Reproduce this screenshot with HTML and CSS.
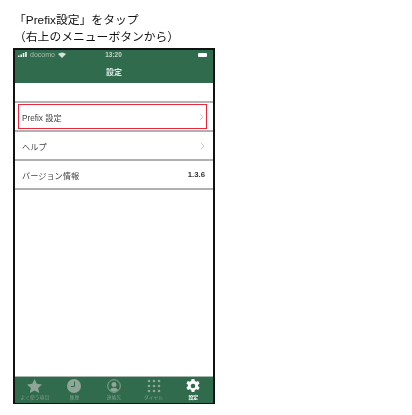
FILE: index.html
```html
<!DOCTYPE html>
<html lang="ja">
<head>
<meta charset="utf-8">
<title>Prefix設定</title>
<link rel="stylesheet" href="styles.css">
</head>
<body>
<div class="caption">
  <p>「Prefix設定」をタップ</p>
  <p>（右上のメニューボタンから）</p>
</div>
<div class="phone">
  <header class="head">
    <div class="status">
      <div class="status-left">
        <svg class="signal" width="9" height="5" viewBox="0 0 9 5"><path d="M0 3.5h1.5V5H0zM2.4 2.5h1.5V5H2.4zM4.8 1h1.5v4H4.8zM7.2 0h1.5v5H7.2z" fill="#fff"/></svg>
        <span>docomo</span>
        <svg width="8" height="6" viewBox="0 0 8 6"><path d="M0 2a6 6 0 0 1 8 0L4 6z" fill="#d5e2da"/></svg>
      </div>
      <span class="time">13:20</span>
      <div class="status-right"><span class="battery"></span></div>
    </div>
    <div class="title">設定</div>
  </header>
  <main class="content">
    <div class="spacer"></div>
    <ul class="list">
      <li class="row selected"><span>Prefix 設定</span><svg class="chev" width="5" height="8" viewBox="0 0 5 8"><path d="M1 1l3 3-3 3" fill="none" stroke="#cccccc" stroke-width="1"/></svg></li>
      <li class="row"><span>ヘルプ</span><svg class="chev" width="5" height="8" viewBox="0 0 5 8"><path d="M1 1l3 3-3 3" fill="none" stroke="#cccccc" stroke-width="1"/></svg></li>
      <li class="row"><span>バージョン情報</span><span class="version">1.3.6</span></li>
    </ul>
  </main>
  <nav class="tabs">
    <div class="tab">
      <svg width="15" height="14" viewBox="0 0 16 15"><path d="M8 0l2.4 5.1 5.6.7-4.1 3.8 1.1 5.4L8 12.300l-5 2.700 1.100-5.400L0 5.800l5.600-.7z" fill="#8fa597"/></svg>
      <span>よく使う項目</span>
    </div>
    <div class="tab">
      <svg width="14" height="14" viewBox="0 0 14 14"><circle cx="7" cy="7" r="7" fill="#8fa597"/><path d="M7.500 2.500V7.500H4" fill="none" stroke="#2f6b4c" stroke-width="1"/></svg>
      <span>履歴</span>
    </div>
    <div class="tab">
      <svg width="14" height="14" viewBox="0 0 14 14"><circle cx="7" cy="7" r="6.300" fill="none" stroke="#8fa597" stroke-width="1"/><circle cx="7" cy="5.500" r="2.500" fill="#8fa597"/><path d="M2.800 11a4.500 3.500 0 0 1 8.400 0A6 6 0 0 1 2.800 11z" fill="#8fa597"/></svg>
      <span>連絡先</span>
    </div>
    <div class="tab">
      <svg width="14" height="14" viewBox="0 0 14 14" fill="#8fa597"><circle cx="2" cy="2" r="1.300"/><circle cx="7" cy="2" r="1.300"/><circle cx="12" cy="2" r="1.300"/><circle cx="2" cy="7" r="1.300"/><circle cx="7" cy="7" r="1.300"/><circle cx="12" cy="7" r="1.300"/><circle cx="2" cy="12" r="1.300"/><circle cx="7" cy="12" r="1.300"/><circle cx="12" cy="12" r="1.300"/></svg>
      <span>ダイヤル</span>
    </div>
    <div class="tab active">
      <svg width="14" height="14" viewBox="0 0 14 14"><path fill-rule="evenodd" fill="#fff" d="M5.600 0h2.800l.4 2 1.500.8 1.900-.8 1.400 2.400-1.500 1.300v1.600L13.600 8.600l-1.400 2.400-1.900-.8-1.500.8-.4 2H5.600l-.4-2-1.500-.8-1.900.8L.4 8.600l1.500-1.300V5.700L.4 4.400 1.800 2l1.900.8 1.500-.8zM7 4.700a2.300 2.300 0 1 0 0 4.600 2.300 2.300 0 0 0 0-4.600z"/></svg>
      <span>設定</span>
    </div>
  </nav>
</div>
</body>
</html>
```

FILE: styles.css
```css
* { box-sizing: border-box; }
html, body { margin: 0; padding: 0; background: #fff; }
body {
  width: 412px;
  height: 415px;
  overflow: hidden;
  font-family: "Liberation Sans", "Noto Sans CJK JP", sans-serif;
}
.caption {
  height: 48px;
  padding: 12px 0 0 14px;
  font-size: 11.8px;
  line-height: 17px;
  color: #111;
  filter: blur(0.4px);
}
.caption p { margin: 0; }
.phone {
  width: 202px;
  height: 356px;
  margin-left: 13px;
  border: 2px solid #111;
  border-bottom-width: 1px;
  display: flex;
  flex-direction: column;
  background: #fff;
  filter: blur(0.45px);
}
.head {
  height: 33px;
  flex: none;
  background: #2f6b4c;
  color: #fff;
  display: flex;
  flex-direction: column;
}
.status {
  height: 10px;
  padding: 0 6px 0 3px;
  display: grid;
  grid-template-columns: 1fr auto 1fr;
  align-items: center;
  font-size: 7px;
  color: #a9c0b2;
}
.status-left { display: flex; align-items: center; gap: 3px; }
.status-right { display: flex; justify-content: flex-end; }
.time { font-size: 6.5px; font-weight: 700; color: #c5d6cb; margin-left: 2px; }
.battery {
  display: block;
  width: 9px;
  height: 4px;
  border-radius: 1px;
  background: #fff;
}
.title {
  height: 17px;
  margin-top: 7px;
  text-align: center;
  font-size: 8px;
  line-height: 12px;
  font-weight: 700;
  color: #e0eae4;
}
.content { flex: 1; min-height: 0; }
.spacer { height: 18px; }
.list {
  list-style: none;
  margin: 0;
  padding: 0;
  border-top: 2px solid #b4b4b4;
}
.row {
  height: 29px;
  padding: 0 8px 0 7px;
  display: flex;
  align-items: center;
  justify-content: space-between;
  font-size: 8.2px;
  color: #444;
  border-bottom: 2px solid #b0b0b0;
}
.row.selected {
  position: relative;
  outline: 1px solid #e8283c;
  outline-offset: -1px;
  margin: 1px 6px 3px 3px;
  padding: 0 3px 0 4px;
  height: 25px;
  border-bottom: 0;
}
.row.selected::after {
  content: "";
  position: absolute;
  left: -3px;
  right: -6px;
  bottom: -3px;
  height: 2px;
  background: #b0b0b0;
}
.version { font-size: 7.8px; font-weight: 700; color: #333; }
.tabs {
  height: 27px;
  flex: none;
  background: #2f6b4c;
  border-top: 1px solid #a9b8ae;
  display: grid;
  grid-template-columns: repeat(5, 1fr);
}
.tab {
  display: flex;
  flex-direction: column;
  align-items: center;
  justify-content: flex-start;
  padding-top: 2px;
  font-size: 4.800px;
  line-height: 5px;
  color: #7f9d8b;
  white-space: nowrap;
}
.tab svg { display: block; margin-bottom: 2px; }
.tab.active { color: #fff; font-weight: 700; }
```
